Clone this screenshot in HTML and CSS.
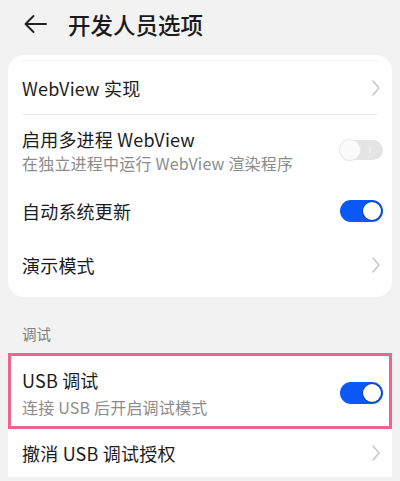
FILE: index.html
```html
<!DOCTYPE html>
<html lang="zh-CN">
<head>
<meta charset="utf-8">
<title>开发人员选项</title>
<link rel="stylesheet" href="styles.css">
</head>
<body>
<div class="page">
  <header class="header">
    <svg class="back" width="24" height="20" viewBox="0 0 24 20" aria-hidden="true">
      <path d="M23 10H2.5M10.5 2L2.5 10L10.5 18" fill="none" stroke="#222" stroke-width="1.9" stroke-linecap="round" stroke-linejoin="round"/>
    </svg>
    <h1 class="title">开发人员选项</h1>
  </header>

  <section class="card card-top">
    <div class="top-line"></div>
    <div class="row row-1 divided">
      <div class="texts"><div class="label">WebView 实现</div></div>
      <svg class="chev" width="8" height="16" viewBox="0 0 8 16" aria-hidden="true"><path d="M1 1L7 8L1 15" fill="none" stroke="#c9c9c9" stroke-width="1.6" stroke-linecap="round" stroke-linejoin="round"/></svg>
    </div>
    <div class="row row-2">
      <div class="texts">
        <div class="label">启用多进程 WebView</div>
        <div class="sub">在独立进程中运行 WebView 渲染程序</div>
      </div>
      <div class="switch off"><span class="mark"></span><span class="knob"></span></div>
    </div>
    <div class="row row-s">
      <div class="texts"><div class="label">自动系统更新</div></div>
      <div class="switch on"><span class="knob"></span></div>
    </div>
    <div class="row row-s">
      <div class="texts"><div class="label">演示模式</div></div>
      <svg class="chev" width="8" height="16" viewBox="0 0 8 16" aria-hidden="true"><path d="M1 1L7 8L1 15" fill="none" stroke="#c9c9c9" stroke-width="1.6" stroke-linecap="round" stroke-linejoin="round"/></svg>
    </div>
  </section>

  <div class="section-title">调试</div>

  <section class="card card-bottom">
    <div class="row row-usb highlight">
      <div class="texts">
        <div class="label">USB 调试</div>
        <div class="sub sub-usb">连接 USB 后开启调试模式</div>
      </div>
      <div class="switch on"><span class="knob"></span></div>
    </div>
    <div class="row row-last">
      <div class="texts"><div class="label">撤消 USB 调试授权</div></div>
      <svg class="chev" width="8" height="16" viewBox="0 0 8 16" aria-hidden="true"><path d="M1 1L7 8L1 15" fill="none" stroke="#c9c9c9" stroke-width="1.6" stroke-linecap="round" stroke-linejoin="round"/></svg>
    </div>
  </section>
</div>
</body>
</html>
```

FILE: styles.css
```css
* { box-sizing: border-box; }
html, body {
  margin: 0;
  padding: 0;
  background: #f2f2f2;
}
body {
  font-family: "Noto Sans CJK SC", "Noto Sans", sans-serif;
  color: #1c1c1c;
  width: 400px;
  height: 481px;
  overflow: hidden;
}
.page {
  display: flex;
  flex-direction: column;
}
.header {
  height: 48px;
  display: flex;
  align-items: center;
  padding-left: 23px;
  gap: 21px;
}
.back { display: block; margin-top: -1px; }
.title {
  margin: 0;
  font-size: 22.5px;
  font-weight: 500;
  line-height: 30px;
  color: #1a1a1a;
}
.card {
  background: #fff;
  margin: 0 8px;
  border-radius: 16px;
}
.card-top {
  margin-top: 7px;
  padding: 0 0 5px;
  display: flex;
  flex-direction: column;
}
.top-line {
  height: 1px;
  margin: 5px 14px 0;
  background: #f0f0f0;
}
.card-bottom {
  border-radius: 16px 16px 0 0;
  display: flex;
  flex-direction: column;
}
.row {
  display: flex;
  align-items: center;
  justify-content: space-between;
  padding: 0 9px 0 14px;
  position: relative;
}
.row-1 { height: 54px; }
.row-2 { height: 69px; padding-top: 1px; }
.row-s { height: 54px; }
.row-usb { height: 76px; padding-top: 3px; }
.row-last { height: 48px; }
.divided::after {
  content: "";
  position: absolute;
  left: 14px;
  right: 14px;
  bottom: 0;
  height: 1px;
  background: #ececec;
}
.texts {
  display: flex;
  flex-direction: column;
  gap: 2px;
}
.label {
  font-size: 18px;
  line-height: 24px;
  letter-spacing: 0.2px;
  color: #1c1c1c;
}
.sub {
  font-size: 16px;
  line-height: 20px;
  letter-spacing: 0.2px;
  color: #8c8c8c;
}
.sub-usb { margin-top: 3px; }
.chev { display: block; margin-right: 3px; }
.highlight {
  outline: 3px solid #ea6590;
  outline-offset: -3px;
}
.switch {
  width: 43px;
  height: 22px;
  border-radius: 11px;
  position: relative;
  flex: none;
}
.switch.on {
  background: #0a59f7;
}
.switch.on .knob {
  position: absolute;
  right: 2px;
  top: 2px;
  width: 18px;
  height: 18px;
  border-radius: 50%;
  background: #fff;
  box-shadow: 0 0 0 1px #0a3fb0;
}
.switch.off {
  height: 20px;
  border-radius: 10px;
  background: #e4e4e4;
}
.switch.off .knob {
  position: absolute;
  left: 0;
  top: 0;
  width: 20px;
  height: 20px;
  border-radius: 50%;
  background: #fbfbfb;
  box-shadow: 0 0 0 1px #e8e8e8;
}
.switch.off .mark {
  position: absolute;
  right: 12px;
  top: 6px;
  width: 2px;
  height: 8px;
  border-radius: 1px;
  background: #ececec;
}
.section-title {
  padding: 27px 0 0 22px;
  height: 56px;
  font-size: 14.5px;
  line-height: 20px;
  color: #7d7d7d;
}
```
